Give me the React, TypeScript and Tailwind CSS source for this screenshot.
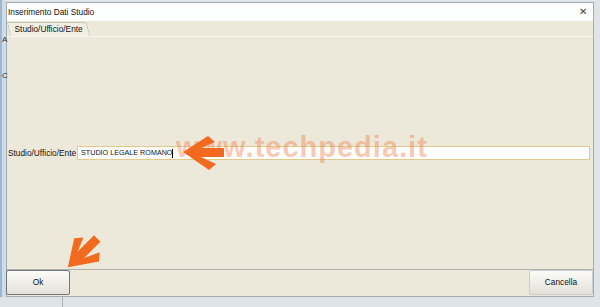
import React from 'react';

const Arrow = ({ className }: { className: string }) => (
  <svg className={className} width="44" height="38" viewBox="0 0 44 38">
    <polygon
      points="2,19 27,3 34,9 20,15 43,15 43,24 20,24 35,31 28,37"
      fill="#f26a1f"
    />
  </svg>
);

const App = () => {
  const ui = { fontFamily: '"Liberation Sans", Arial, sans-serif' };

  return (
    <div className="relative w-[600px] h-[307px] overflow-hidden bg-[#dfe4e9]" style={ui}>
      {/* background window edge */}
      <div className="absolute left-0 top-0 w-[6px] h-[297px] bg-[#cfdcea] border-l-2 border-[#9fb6d1]">
        <span className="absolute left-0 top-[34px] text-[8px] text-[#333]">A</span>
        <span className="absolute left-0 top-[70px] text-[8px] text-[#333]">C</span>
      </div>
      <div className="absolute left-[62px] top-[297px] w-px h-[10px] bg-[#a9b3bd]" />

      {/* dialog */}
      <div className="ml-[6px] pt-[2px] w-[588px]">
        <div className="flex flex-col h-[295px] border border-[#a3acb5] bg-[#ece9da]">
          {/* title bar */}
          <div className="flex items-center justify-between h-[18px] bg-[#fdfefe] pl-[1px] pr-[6px]">
            <span className="text-[8.3px] text-[#111]">Inserimento Dati Studio</span>
            <span className="text-[10px] leading-none text-[#444]">✕</span>
          </div>

          {/* tab strip */}
          <div className="flex items-end h-[16px] px-[3px] border-b border-[#f7f5ee]">
            <div className="flex items-center h-[14px] px-[5px] bg-[#f1efe4] border-t border-l border-r border-[#c7c4b4] rounded-tr-[4px] skew-x-[12deg] origin-bottom-left">
              <span className="text-[8.3px] text-[#111] -skew-x-[12deg]">Studio/Ufficio/Ente</span>
            </div>
          </div>

          {/* tab panel */}
          <div className="flex-1 flex items-center pl-[1px] pr-[3px] border-b border-[#b3b1a5]">
            <span className="text-[8.3px] text-[#111] w-[69px]">Studio/Ufficio/Ente</span>
            <div className="flex-1 flex items-center h-[14px] bg-white border border-[#e2c987] pl-[3px]">
              <span className="text-[7.2px] text-[#111]">STUDIO LEGALE ROMANO</span>
              <span className="w-px h-[9px] bg-black" />
            </div>
          </div>

          {/* buttons */}
          <div className="flex justify-between items-start h-[26px]">
            <button className="w-[64px] h-[25px] -ml-px border border-[#6f767c] rounded-[2px] bg-gradient-to-b from-[#fbfbf9] to-[#e3e1d8] text-[8.3px] text-[#111]">
              Ok
            </button>
            <button className="w-[64px] h-[25px] border border-[#c9cdd1] rounded-[2px] bg-gradient-to-b from-[#fbfbf9] to-[#e3e1d8] text-[8.3px] text-[#111]">
              Cancella
            </button>
          </div>
        </div>
      </div>

      {/* watermark */}
      <div className="absolute left-[176px] top-[133px] text-[29px] leading-none font-bold tracking-[1px] text-[rgba(240,125,75,0.42)]">
        www.techpedia.it
      </div>

      {/* arrows */}
      <Arrow className="absolute left-[181px] top-[133px]" />
      <Arrow className="absolute left-[60px] top-[234px] -rotate-45" />
    </div>
  );
};

export default App;
